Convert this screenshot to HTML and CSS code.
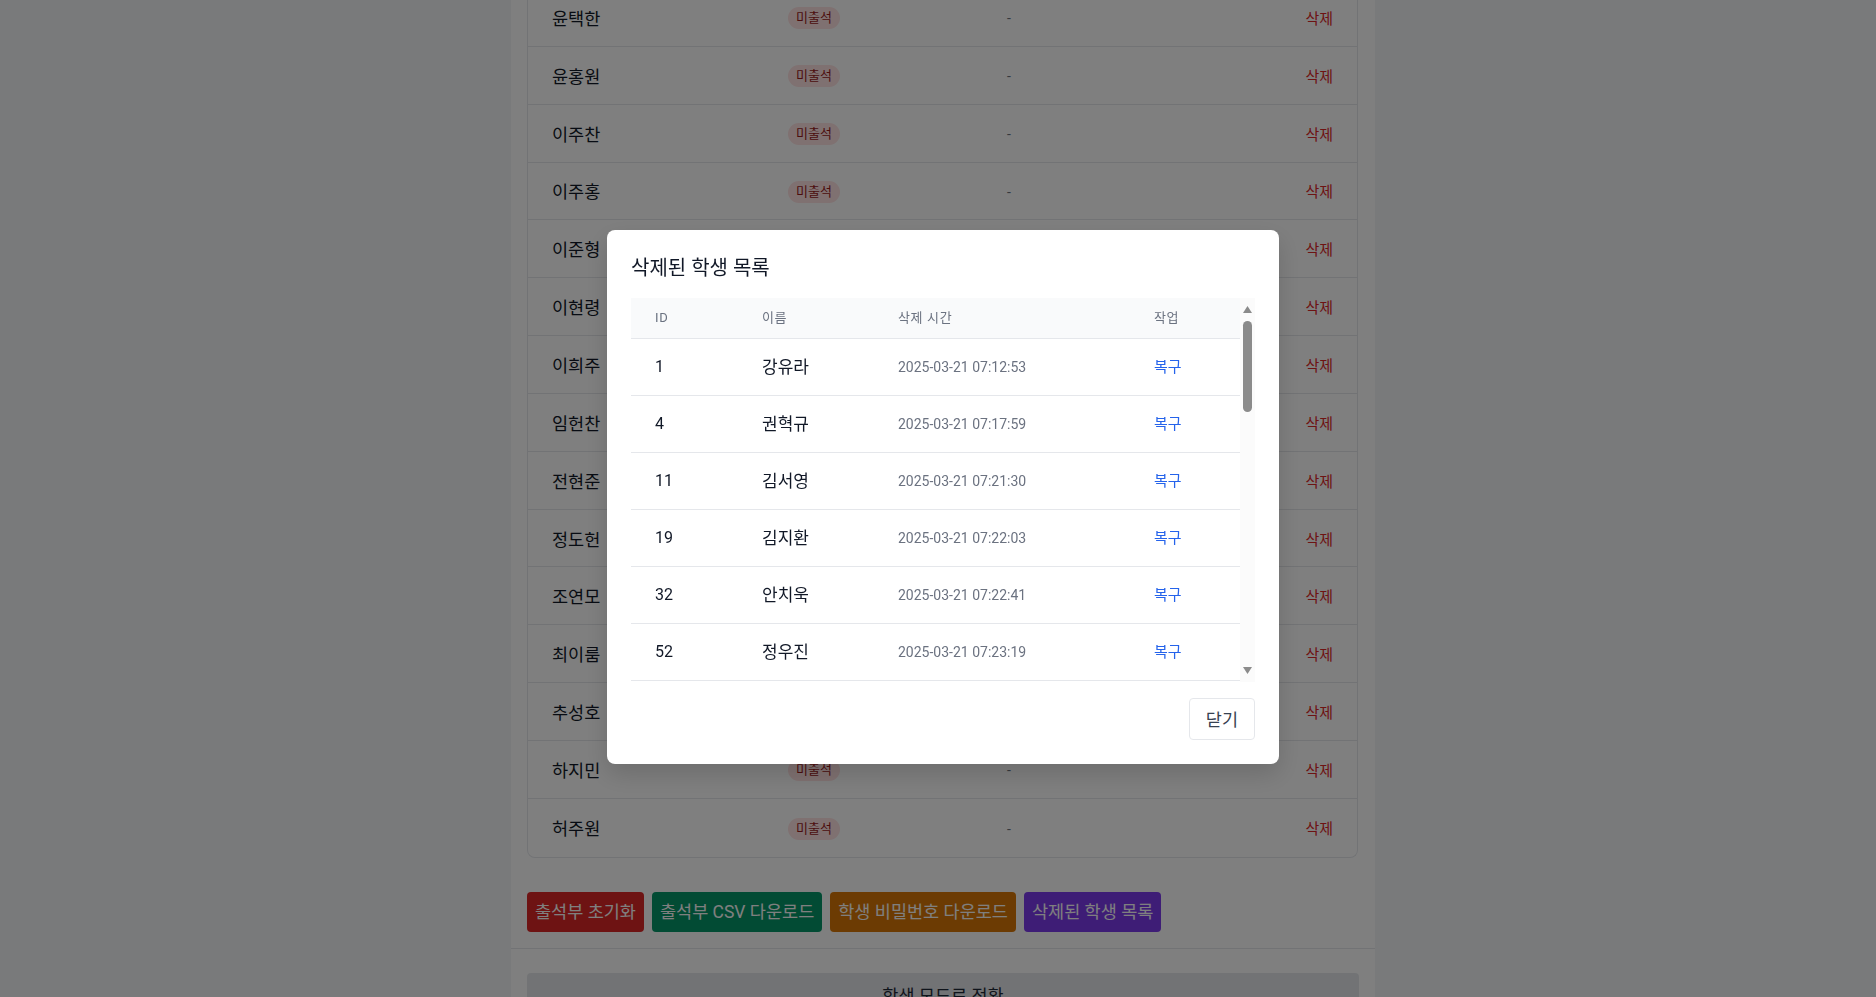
FILE: index.html
```html
<!DOCTYPE html>
<html lang="ko">
<head>
<meta charset="utf-8">
<title>출석부 관리</title>
<link rel="stylesheet" href="styles.css">
</head>
<body>
<div class="page">
  <div class="panel">
    <div class="panel-body">
      <div class="card">
        <div class="row"><span class="c-name">윤택한</span><span class="c-status"><span class="badge">미출석</span></span><span class="c-time">-</span><span class="c-act">삭제</span></div>
        <div class="row"><span class="c-name">윤홍원</span><span class="c-status"><span class="badge">미출석</span></span><span class="c-time">-</span><span class="c-act">삭제</span></div>
        <div class="row"><span class="c-name">이주찬</span><span class="c-status"><span class="badge">미출석</span></span><span class="c-time">-</span><span class="c-act">삭제</span></div>
        <div class="row"><span class="c-name">이주홍</span><span class="c-status"><span class="badge">미출석</span></span><span class="c-time">-</span><span class="c-act">삭제</span></div>
        <div class="row"><span class="c-name">이준형</span><span class="c-status"><span class="badge">미출석</span></span><span class="c-time">-</span><span class="c-act">삭제</span></div>
        <div class="row"><span class="c-name">이현령</span><span class="c-status"><span class="badge">미출석</span></span><span class="c-time">-</span><span class="c-act">삭제</span></div>
        <div class="row"><span class="c-name">이희주</span><span class="c-status"><span class="badge">미출석</span></span><span class="c-time">-</span><span class="c-act">삭제</span></div>
        <div class="row"><span class="c-name">임헌찬</span><span class="c-status"><span class="badge">미출석</span></span><span class="c-time">-</span><span class="c-act">삭제</span></div>
        <div class="row"><span class="c-name">전현준</span><span class="c-status"><span class="badge">미출석</span></span><span class="c-time">-</span><span class="c-act">삭제</span></div>
        <div class="row"><span class="c-name">정도헌</span><span class="c-status"><span class="badge">미출석</span></span><span class="c-time">-</span><span class="c-act">삭제</span></div>
        <div class="row"><span class="c-name">조연모</span><span class="c-status"><span class="badge">미출석</span></span><span class="c-time">-</span><span class="c-act">삭제</span></div>
        <div class="row"><span class="c-name">최이룸</span><span class="c-status"><span class="badge">미출석</span></span><span class="c-time">-</span><span class="c-act">삭제</span></div>
        <div class="row"><span class="c-name">추성호</span><span class="c-status"><span class="badge">미출석</span></span><span class="c-time">-</span><span class="c-act">삭제</span></div>
        <div class="row"><span class="c-name">하지민</span><span class="c-status"><span class="badge">미출석</span></span><span class="c-time">-</span><span class="c-act">삭제</span></div>
        <div class="row"><span class="c-name">허주원</span><span class="c-status"><span class="badge">미출석</span></span><span class="c-time">-</span><span class="c-act">삭제</span></div>
      </div>
      <div class="actions">
        <button class="btn btn-red">출석부 초기화</button>
        <button class="btn btn-green">출석부 CSV 다운로드</button>
        <button class="btn btn-amber">학생 비밀번호 다운로드</button>
        <button class="btn btn-purple">삭제된 학생 목록</button>
      </div>
    </div>
    <div class="panel-footer">
      <button class="mode-btn">학생 모드로 전환</button>
    </div>
  </div>
</div>

<div class="overlay">
  <div class="modal">
    <h2 class="modal-title">삭제된 학생 목록</h2>
    <div class="scroll-wrap">
      <div class="scroll">
        <table class="dtable">
          <colgroup><col class="w-id"><col class="w-name"><col class="w-time"><col class="w-act"></colgroup>
          <thead>
            <tr><th>ID</th><th>이름</th><th>삭제 시간</th><th>작업</th></tr>
          </thead>
          <tbody>
            <tr><td>1</td><td class="t-name">강유라</td><td class="t-time">2025-03-21 07:12:53</td><td class="t-act">복구</td></tr>
            <tr><td>4</td><td class="t-name">권혁규</td><td class="t-time">2025-03-21 07:17:59</td><td class="t-act">복구</td></tr>
            <tr><td>11</td><td class="t-name">김서영</td><td class="t-time">2025-03-21 07:21:30</td><td class="t-act">복구</td></tr>
            <tr><td>19</td><td class="t-name">김지환</td><td class="t-time">2025-03-21 07:22:03</td><td class="t-act">복구</td></tr>
            <tr><td>32</td><td class="t-name">안치욱</td><td class="t-time">2025-03-21 07:22:41</td><td class="t-act">복구</td></tr>
            <tr><td>52</td><td class="t-name">정우진</td><td class="t-time">2025-03-21 07:23:19</td><td class="t-act">복구</td></tr>
            <tr><td>57</td><td class="t-name">박민서</td><td class="t-time">2025-03-21 07:24:02</td><td class="t-act">복구</td></tr>
            <tr><td>60</td><td class="t-name">배서윤</td><td class="t-time">2025-03-21 07:24:48</td><td class="t-act">복구</td></tr>
            <tr><td>63</td><td class="t-name">서준호</td><td class="t-time">2025-03-21 07:25:11</td><td class="t-act">복구</td></tr>
            <tr><td>67</td><td class="t-name">송하은</td><td class="t-time">2025-03-21 07:25:57</td><td class="t-act">복구</td></tr>
          </tbody>
        </table>
      </div>
      <div class="vscroll" aria-hidden="true">
        <div class="vs-btn">
          <svg width="15" height="23" viewBox="0 0 15 23"><polygon points="3,15 12,15 7.5,8" fill="#8b8b8b"/></svg>
        </div>
        <div class="vs-track"><div class="vs-thumb"></div></div>
        <div class="vs-btn">
          <svg width="15" height="23" viewBox="0 0 15 23"><polygon points="3,8 12,8 7.5,15" fill="#8b8b8b"/></svg>
        </div>
      </div>
    </div>
    <div class="modal-foot">
      <button class="close-btn">닫기</button>
    </div>
  </div>
</div>
</body>
</html>
```

FILE: styles.css
```css
* { box-sizing: border-box; }
html, body { margin: 0; padding: 0; }
body {
  background: #f3f4f6;
  font-family: Roboto, "Noto Sans CJK KR", sans-serif;
  color: #111827;
  overflow: hidden;
}
button { font-family: inherit; cursor: pointer; }

.page {
  padding-left: 10px;
}
.panel {
  width: 864px;
  margin: -11px auto 0;
  background: #ffffff;
}
.panel-body {
  padding: 0 16px 16px 16px;
}
.card {
  border: 1px solid #e5e7eb;
  border-top: none;
  border-radius: 0 0 8px 8px;
  width: 831px;
}
.row {
  display: grid;
  grid-template-columns: 236px 219px 1fr 160px;
  align-items: center;
  height: 57.85px;
  padding: 0 24px;
  border-bottom: 1px solid #e5e7eb;
}
.row:last-child { border-bottom: none; }
.c-name { color: #111827; font-size: 17.5px; }
.c-status { display: flex; }
.badge {
  display: inline-flex;
  align-items: center;
  height: 22px;
  padding: 0 8px;
  border-radius: 999px;
  background: #fee2e2;
  color: #991b1b;
  font-size: 13px;
  font-weight: 400;
  line-height: 22px;
  margin-top: 2px;
}
.c-time { color: #6b7280; font-size: 14px; padding-top: 2px; }
.c-act { color: #dc2626; font-size: 15px; text-align: right; }

.actions {
  display: flex;
  gap: 8px;
  margin-top: 34px;
}
.btn {
  height: 40px;
  border: none;
  border-radius: 4px;
  padding: 0 8px;
  font-size: 17.5px;
  line-height: 24px;
  color: #ffffff;
}
.btn-red { background: #dc2626; }
.btn-green { background: #059669; }
.btn-amber { background: #d97706; }
.btn-purple { background: #7c3aed; }

.panel-footer {
  border-top: 1px solid #e5e7eb;
  padding: 24px 16px 24px 16px;
}
.mode-btn {
  width: 100%;
  height: 44px;
  border: none;
  border-radius: 4px;
  background: #e5e7eb;
  color: #1f2937;
  font-size: 17.5px;
}

/* modal */
.overlay {
  position: fixed;
  inset: 0;
  background: rgba(0, 0, 0, 0.5);
  display: flex;
  align-items: center;
  justify-content: center;
  padding-left: 10px;
  padding-bottom: 4px;
}
.modal {
  width: 672px;
  background: #ffffff;
  border-radius: 8px;
  padding: 24px;
  box-shadow: 0 10px 25px rgba(0,0,0,0.15);
}
.modal-title {
  margin: 0 0 16px 0;
  font-size: 20px;
  line-height: 28px;
  font-weight: 400;
  color: #111827;
}
.scroll-wrap {
  display: flex;
  height: 384px;
}
.scroll {
  flex: 1;
  min-width: 0;
  overflow: hidden;
}
.vscroll {
  width: 15px;
  flex: none;
  display: flex;
  flex-direction: column;
  background: #fbfbfb;
}
.vs-btn {
  height: 23px;
  flex: none;
}
.vs-btn svg { display: block; }
.vs-track {
  flex: 1;
  padding: 0 3px;
}
.vs-thumb {
  width: 9px;
  height: 91px;
  border-radius: 4.5px;
  background: #8b8b8b;
}
.dtable {
  width: 100%;
  border-collapse: collapse;
  table-layout: fixed;
}
.w-id { width: 107px; }
.w-name { width: 136px; }
.w-time { width: 256px; }
.w-act { width: auto; }
.dtable thead tr { background: #f9fafb; }
.dtable th {
  padding: 12px 24px;
  text-align: left;
  font-size: 13px;
  line-height: 16px;
  font-weight: 400;
  color: #6b7280;
  letter-spacing: 0.05em;
}
.dtable td {
  padding: 16px 24px;
  font-size: 16px;
  line-height: 24px;
  color: #111827;
  white-space: nowrap;
  border-top: 1px solid #e5e7eb;
}
.dtable td.t-name { font-size: 17px; }
.dtable td.t-time { font-size: 14px; color: #6b7280; }
.dtable td.t-act { font-size: 15px; color: #2563eb; }
.modal-foot {
  display: flex;
  justify-content: flex-end;
  margin-top: 16px;
}
.close-btn {
  height: 42px;
  padding: 0 16px;
  border: 1px solid #e5e7eb;
  border-radius: 4px;
  background: #ffffff;
  color: #374151;
  font-size: 17.5px;
}
```
